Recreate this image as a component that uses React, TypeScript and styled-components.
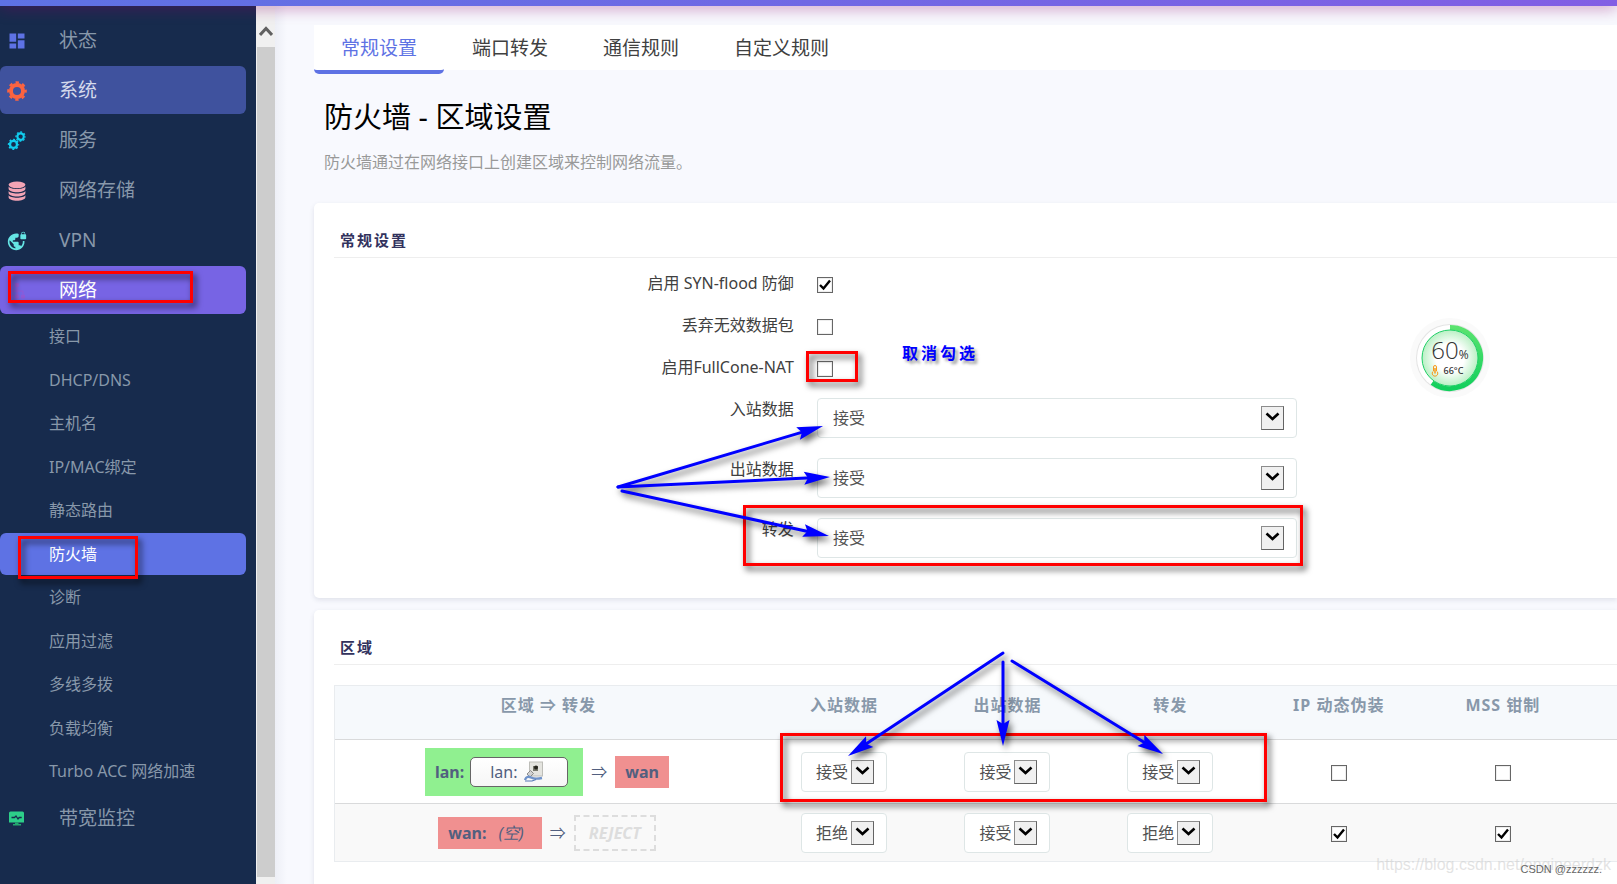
import React, { useState } from "react";
import styled, { createGlobalStyle, css } from "styled-components";
import { MdDashboard, MdVpnLock } from "react-icons/md";

const GlobalStyle = createGlobalStyle`
  *, *::before, *::after { box-sizing: border-box; }
  html, body { margin: 0; height: 100%; overflow: hidden; }
  body {
    background: #f8f9fe;
    color: #525f7f;
    font-family: "Noto Sans", "Noto Sans CJK SC", sans-serif;
    font-size: 16px;
  }
  ul { list-style: none; margin: 0; padding: 0; }
  a { color: inherit; text-decoration: none; }
`;

/* ---------- page frame ---------- */

const Page = styled.div`
  position: relative;
  display: flex;
  flex-direction: column;
  height: 100vh;
  overflow: hidden;
`;

const TopBar = styled.header`
  position: relative;
  z-index: 2;
  flex: none;
  height: 6px;
  background: linear-gradient(90deg, #5e72e4, #825ee4);
  box-shadow: 0 0 16px rgba(136, 0, 104, 0.75);
`;

const Body = styled.div`
  display: flex;
  flex: 1;
  min-height: 0;
`;

const Sidebar = styled.nav`
  flex: none;
  width: 256px;
  padding-top: 10px;
  background: #172b4d;
  overflow: hidden;
`;

const Menu = styled.ul`
  display: flex;
  flex-direction: column;
  gap: 2px;
  padding-right: 10px;
`;

const pill = css<{ $fill?: string }>`
  border-radius: 6px;
  background: ${(p) => p.$fill || "transparent"};
`;

const MenuLink = styled.a<{ $fill?: string; $color?: string }>`
  ${pill}
  display: flex;
  align-items: center;
  height: 48px;
  padding-left: 7px;
  color: ${(p) => p.$color || "#8898aa"};
  font-size: 19px;
  font-weight: 400;
  line-height: 28px;
`;

const MenuIcon = styled.span`
  display: flex;
  align-items: center;
  width: 52px;
  padding-top: 2px;
`;

const SubMenu = styled.ul`
  display: grid;
  align-content: space-between;
  height: 477px;
  margin-top: 1px;
`;

const SubLink = styled.a<{ $fill?: string; $color?: string }>`
  ${pill}
  display: flex;
  align-items: center;
  height: 42px;
  padding-left: 49px;
  color: ${(p) => p.$color || "#8898aa"};
  font-size: 16px;
  line-height: 24px;
`;

const ScrollTrack = styled.div`
  display: flex;
  flex-direction: column;
  align-items: stretch;
  flex: none;
  width: 19px;
  padding: 0 0 7px 1px;
  background: #f0f0f0;
`;

const ScrollUp = styled.div`
  display: flex;
  align-items: center;
  justify-content: center;
  height: 41px;
  padding: 9px 1px 0 0;
`;

const ScrollThumb = styled.div`
  flex: 1;
  background: #cdcdcd;
`;

const Main = styled.main`
  flex: 1;
  min-width: 0;
  padding: 19px 0 0 39px;
  background: linear-gradient(90deg, #edeff6, #f8f9fe 12px);
  overflow: hidden;
`;

/* ---------- tabs and heading ---------- */

const Tabs = styled.nav`
  display: flex;
  gap: 1px;
  height: 45px;
  background: #fff;
`;

const Tab = styled.a<{ $active?: boolean }>`
  height: 49px;
  padding: 0 27px;
  border-bottom: 4px solid ${(p) => (p.$active ? "#5e72e4" : "transparent")};
  border-radius: 0 0 5px 5px;
  color: ${(p) => (p.$active ? "#5e72e4" : "#404040")};
  font-size: 19px;
  font-weight: 400;
  line-height: 46px;
`;

const Title = styled.h1`
  margin: 27px 0 13px 10px;
  color: #000;
  font-size: 29px;
  font-weight: 400;
  line-height: 40px;
`;

const Description = styled.p`
  margin: 0 0 29px 10px;
  color: #999;
  font-size: 16px;
  font-weight: 400;
  line-height: 24px;
`;

/* ---------- cards ---------- */

const Card = styled.section`
  margin-bottom: 12px;
  padding: 0 0 20px 20px;
  border-radius: 5px 0 0 5px;
  background: #fff;
  box-shadow: 0 2px 5px rgba(50, 60, 90, 0.12);
  &:last-child { padding-bottom: 60px; }
`;

const CardTitle = styled.h2`
  margin: 0;
  padding: 26px 0 6px 6px;
  border-bottom: 1px solid #eee;
  color: #32325d;
  font-size: 15px;
  font-weight: 700;
  letter-spacing: 2px;
  line-height: 22px;
`;

const Form = styled.form`
  padding-top: 14px;
`;

const Field = styled.div<{ $tall?: boolean }>`
  display: grid;
  grid-template-columns: 36% 480px;
  column-gap: 21px;
  height: ${(p) => (p.$tall ? 60 : 42)}px;
`;

const FieldLabel = styled.label`
  padding-right: 2px;
  color: #404040;
  font-size: 16px;
  line-height: 22px;
  text-align: right;
`;

const CheckWrap = styled.span`
  position: relative;
  display: inline-block;
  width: 16px;
  height: 16px;
  vertical-align: top;
`;

const CheckSlot = styled.div`
  padding-top: 5px;
  line-height: 16px;
`;

const CheckInput = styled.input`
  appearance: none;
  display: block;
  width: 16px;
  height: 16px;
  margin: 0;
  border: 1px solid #666;
  background: #fff;
  box-shadow: inset 0 0 0 1px #eee;
  & + svg { display: none; }
  &:checked + svg { display: block; }
`;

const CheckMark = styled.svg`
  position: absolute;
  inset: 0;
  pointer-events: none;
`;

const SelectWrap = styled.span<{ $wide?: boolean }>`
  position: relative;
  display: inline-block;
  width: ${(p) => (p.$wide ? "100%" : "86px")};
  height: 40px;
  vertical-align: top;
`;

const SelectBox = styled.select<{ $wide?: boolean }>`
  appearance: none;
  display: block;
  width: 100%;
  height: 40px;
  padding: 0 0 0 ${(p) => (p.$wide ? 15 : 14)}px;
  border: 1px solid #dee6e6;
  border-radius: 4px;
  background: #fff;
  color: #525252;
  font-family: inherit;
  font-size: 16px;
  line-height: 24px;
`;

const SelectArrow = styled.span`
  position: absolute;
  top: 8px;
  right: 13px;
  display: flex;
  align-items: center;
  justify-content: center;
  width: 23px;
  height: 24px;
  padding-bottom: 2px;
  border: 1px solid;
  border-color: #8c8c8c #646464 #646464 #8c8c8c;
  background: #f0f0f0;
  pointer-events: none;
`;

/* ---------- zone table ---------- */

const ZoneTable = styled.table`
  width: 100%;
  margin-top: 20px;
  border: 1px solid #e9ecef;
  border-right: 0;
  border-collapse: separate;
  border-spacing: 0;
  table-layout: fixed;
`;

const HeadCell = styled.th`
  height: 54px;
  padding: 7px 0 0;
  border-bottom: 1px solid #d9dadb;
  background: #f6f9fc;
  color: #8898aa;
  font-size: 16px;
  font-weight: 700;
  letter-spacing: 1px;
  line-height: 24px;
  text-align: center;
  vertical-align: top;
`;

const ZoneRow = styled.tr<{ $alt?: boolean }>`
  height: ${(p) => (p.$alt ? 57 : 64)}px;
  background: ${(p) => (p.$alt ? "#f9f9f9" : "#fff")};
  & > td { border-bottom: ${(p) => (p.$alt ? "0" : "1px solid #d9dadb")}; }
`;

const Cell = styled.td`
  padding: 0;
  text-align: center;
  vertical-align: middle;
`;

const CheckCell = styled(Cell)`
  padding-top: 8px;
`;

const ZonePair = styled.div`
  display: flex;
  align-items: center;
  justify-content: center;
  gap: 8px;
  padding-right: 3px;
  line-height: 24px;
`;

const ZoneTag = styled.span<{ $tone: "lan" | "wan" }>`
  display: flex;
  align-items: center;
  gap: 6px;
  height: ${(p) => (p.$tone === "lan" ? 48 : 32)}px;
  padding: 0 ${(p) => (p.$tone === "lan" ? 15 : 10)}px 0 10px;
  background: ${(p) => (p.$tone === "lan" ? "#90f090" : "#f09090")};
  font-weight: 700;
`;

const EmptyNote = styled.em`
  padding: 0 8px 0 6px;
  font-weight: 400;
`;

const NetBadge = styled.span`
  display: flex;
  align-items: center;
  gap: 6px;
  width: 98px;
  height: 30px;
  padding-left: 19px;
  border: 1px solid #666;
  border-radius: 5px;
  background: linear-gradient(#fff, #f6f6f6);
  font-weight: 400;
`;

const Reject = styled.em`
  height: 36px;
  padding: 0 13px;
  border: 2px dashed #ddd;
  color: #ddd;
  font-weight: 700;
  line-height: 32px;
`;

/* ---------- floating layers ---------- */

const Monitor = styled.div`
  position: absolute;
  z-index: 3;
  top: 317px;
  right: 126px;
  width: 82px;
  height: 82px;
`;

const MonitorRing = styled.svg`
  position: absolute;
  inset: 0;
`;

const MonitorText = styled.div`
  position: relative;
  display: flex;
  flex-direction: column;
  align-items: center;
  padding-top: 19px;
  color: #333;
`;

const Load = styled.div`
  display: flex;
  align-items: baseline;
  height: 28px;
  font-family: "Open Sans", "Noto Sans", sans-serif;
  font-size: 24px;
  font-weight: 300;
  line-height: 28px;
`;

const Percent = styled.span`
  font-size: 12px;
  font-weight: 400;
  line-height: 12px;
`;

const Heat = styled.div`
  display: flex;
  align-items: center;
  gap: 5px;
  height: 14px;
  padding-right: 6px;
  font-size: 9px;
  font-weight: 500;
  line-height: 14px;
`;

const Mark = styled.div<{ $x: number; $y: number; $w: number; $h: number }>`
  position: absolute;
  z-index: 4;
  left: ${(p) => p.$x}px;
  top: ${(p) => p.$y}px;
  width: ${(p) => p.$w}px;
  height: ${(p) => p.$h}px;
  border: 3px solid #f00;
  filter: drop-shadow(3px 4px 3px rgba(0, 0, 0, 0.7));
  pointer-events: none;
`;

const Arrows = styled.svg`
  position: absolute;
  z-index: 4;
  top: 0;
  left: 0;
  filter: drop-shadow(3px 4px 3px rgba(0, 0, 0, 0.6));
  pointer-events: none;
`;

const MarkNote = styled.strong`
  position: absolute;
  z-index: 4;
  top: 341px;
  left: 902px;
  color: #00f;
  font-size: 16px;
  letter-spacing: 3px;
  line-height: 24px;
  text-shadow: 3px 3px 3px rgba(0, 0, 0, 0.4);
`;

const SiteMark = styled.div`
  position: absolute;
  z-index: 4;
  right: 6px;
  bottom: 9px;
  color: rgba(200, 200, 200, 0.5);
  font-family: "Liberation Sans", sans-serif;
  font-size: 16px;
  line-height: 20px;
`;

const AuthorMark = styled.div`
  position: absolute;
  z-index: 5;
  right: 15px;
  bottom: 6px;
  color: #666;
  font-family: "Liberation Sans", sans-serif;
  font-size: 11px;
  line-height: 18px;
`;

/* ---------- icons ---------- */

const Gear = ({ cx, cy, r, color }: { cx: number; cy: number; r: number; color: string }) => {
  const tooth = (2 * Math.PI * r) / 16;
  return (
    <g fill="none" stroke={color}>
      <circle cx={cx} cy={cy} r={r * 0.7} strokeWidth={r * 0.46} />
      <circle
        cx={cx}
        cy={cy}
        r={r}
        strokeWidth={r * 0.28}
        strokeDasharray={`${tooth} ${tooth}`}
        strokeDashoffset={tooth / 2}
      />
    </g>
  );
};

const SystemIcon = () => (
  <svg width="20" height="20" viewBox="0 0 20 20">
    <Gear cx={10} cy={10} r={8.6} color="#fb6340" />
  </svg>
);

const ServicesIcon = () => (
  <svg width="20" height="20" viewBox="0 0 20 20">
    <Gear cx={6.5} cy={13.4} r={5} color="#11cdef" />
    <Gear cx={13.6} cy={5.6} r={4.6} color="#11cdef" />
  </svg>
);

const StorageIcon = () => (
  <svg width="20" height="20" viewBox="0 0 20 20" fill="#f3a4b5">
    <ellipse cx="10" cy="3.8" rx="8.4" ry="3.4" />
    <path d="M1.6 5.6C3 8.9 17 8.9 18.4 5.6v2.2c0 4.6-16.8 4.6-16.8 0z" />
    <path d="M1.6 10C3 13.3 17 13.3 18.4 10v2c0 4.6-16.8 4.6-16.8 0z" />
    <path d="M1.6 14.2C3 17.5 17 17.5 18.4 14.2v2.1c0 4.6-16.8 4.6-16.8 0z" />
  </svg>
);

const NetworkIcon = () => (
  <svg width="20" height="20" viewBox="0 0 20 20" fill="#9b55cf" stroke="#9b55cf" opacity="0.7">
    <path d="M8.5 2.5h3v3h-3zM2.5 14h3v3h-3zM8.5 14h3v3h-3zM14.5 14h3v3h-3z" />
    <path d="M10 6v8M4 13v-3h12v3" fill="none" />
  </svg>
);

const BandwidthIcon = () => (
  <svg width="20" height="20" viewBox="0 0 20 20">
    <path d="M3.5 2.5h12a1.5 1.5 0 0 1 1.5 1.5v9.5h-15V4a1.5 1.5 0 0 1 1.5-1.5z" fill="#2dce89" />
    <path d="M8 13.5h3.500V15H14v1.500H6V15h2z" fill="#24a870" />
    <path d="M4.500 8.500h3l1.500-1.500 2 3 1.200-1.500h2.500" fill="none" stroke="#172b4d" strokeWidth="1.300" />
  </svg>
);

const EthernetIcon = () => (
  <svg width="19" height="21" viewBox="0 0 19 21">
    <rect x="5.500" y="1" width="13" height="14" fill="#e4e4df" stroke="#bdbdb8" />
    <path d="M9 5h5v5H9z" fill="#77786c" />
    <circle cx="12" cy="6.500" r="2" fill="#26261e" />
    <path d="M3 13l3.500-3.500 3 3L6 16z" fill="#d2d2d2" stroke="#777" strokeWidth=".8" />
    <path d="M1 19c1-4 4-3.500 6-2.500s6 1.500 11 .5" fill="none" stroke="#6f92c9" strokeWidth="2.400" />
    <path d="M1 20h7l4-1.500" fill="none" stroke="#5479b5" strokeWidth="1.200" />
  </svg>
);

/* ---------- controls ---------- */

const Check = ({ id, label, on }: { id: string; label?: string; on?: boolean }) => (
  <CheckWrap>
    <CheckInput type="checkbox" id={id} aria-label={label} defaultChecked={on} />
    <CheckMark width="16" height="16" viewBox="0 0 16 16">
      <path d="M3 8l3.500 3.500L13 3.500" fill="none" stroke="#000" strokeWidth="2.400" />
    </CheckMark>
  </CheckWrap>
);

const Policy = ({ id, label, value, wide }: { id: string; label?: string; value: string; wide?: boolean }) => (
  <SelectWrap $wide={wide}>
    <SelectBox id={id} aria-label={label} defaultValue={value} $wide={wide}>
      <option>接受</option>
      <option>拒绝</option>
      <option>丢弃</option>
    </SelectBox>
    <SelectArrow>
      <svg width="15" height="10" viewBox="0 0 15 10">
        <path d="M1.500 1.500l6 5.500 6-5.500" fill="none" stroke="#000" strokeWidth="2.600" />
      </svg>
    </SelectArrow>
  </SelectWrap>
);

/* One annotation arrow: a shaft with a swept head at (x2, y2). */
const Arrow = ({ x1, y1, x2, y2 }: { x1: number; y1: number; x2: number; y2: number }) => {
  const angle = (Math.atan2(y2 - y1, x2 - x1) * 180) / Math.PI;
  const length = Math.hypot(x2 - x1, y2 - y1);
  return (
    <g transform={`translate(${x2} ${y2}) rotate(${angle})`}>
      <path d={`M${-length} 0H-18`} stroke="#00f" strokeWidth="3" strokeLinecap="round" />
      <path d="M0 0L-26 -6.500L-22 0L-26 6.500Z" fill="#00f" />
    </g>
  );
};

const subItems = [
  "接口", "DHCP/DNS", "主机名", "IP/MAC绑定", "静态路由", "防火墙",
  "诊断", "应用过滤", "多线多拨", "负载均衡", "Turbo ACC 网络加速",
];

const menuItems: { text: string; icon: React.ReactNode; fill?: string; color?: string; open?: boolean }[] = [
  { text: "状态", icon: <MdDashboard size={20} color="#5e72e4" /> },
  { text: "系统", icon: <SystemIcon />, fill: "#3f529e", color: "#d5daec" },
  { text: "服务", icon: <ServicesIcon /> },
  { text: "网络存储", icon: <StorageIcon /> },
  { text: "VPN", icon: <MdVpnLock size={20} color="#65e5e5" /> },
  { text: "网络", icon: <NetworkIcon />, fill: "#7764e4", color: "#fff", open: true },
  { text: "带宽监控", icon: <BandwidthIcon /> },
];

const tabs = ["常规设置", "端口转发", "通信规则", "自定义规则"];

const checks = [
  { id: "syn", text: "启用 SYN-flood 防御", on: true },
  { id: "drop", text: "丢弃无效数据包" },
  { id: "cone", text: "启用FullCone-NAT" },
];

const policies = ["入站数据", "出站数据", "转发"];

const columnWidths = ["33.3%", "12.8%", "12.7%", "12.7%", "13.6%", "12%", "auto"];

export default function App() {
  const [activeTab, setActiveTab] = useState(0);

  return (
    <>
      <GlobalStyle />
      <Page>
        <TopBar />
        <Body>
          <Sidebar>
            <Menu>
              {menuItems.map((item) => (
                <li key={item.text}>
                  <MenuLink href="#" $fill={item.fill} $color={item.color}>
                    <MenuIcon>{item.icon}</MenuIcon>
                    {item.text}
                  </MenuLink>
                  {item.open && (
                    <SubMenu>
                      {subItems.map((name) => (
                        <li key={name}>
                          <SubLink
                            href="#"
                            $fill={name === "防火墙" ? "#5e72e4" : undefined}
                            $color={name === "防火墙" ? "#fff" : undefined}
                          >
                            {name}
                          </SubLink>
                        </li>
                      ))}
                    </SubMenu>
                  )}
                </li>
              ))}
            </Menu>
          </Sidebar>
          <ScrollTrack>
            <ScrollUp>
              <svg width="14" height="12" viewBox="0 0 14 12">
                <path d="M1 10l6-6.500 6 6.500" fill="none" stroke="#606060" strokeWidth="3" />
              </svg>
            </ScrollUp>
            <ScrollThumb />
          </ScrollTrack>

          <Main>
            <Tabs>
              {tabs.map((name, i) => (
                <Tab key={name} href="#" $active={i === activeTab} onClick={() => setActiveTab(i)}>
                  {name}
                </Tab>
              ))}
            </Tabs>
            <Title>防火墙 - 区域设置</Title>
            <Description>防火墙通过在网络接口上创建区域来控制网络流量。</Description>

            <Card>
              <CardTitle>常规设置</CardTitle>
              <Form>
                {checks.map((c) => (
                  <Field key={c.id}>
                    <FieldLabel htmlFor={c.id}>{c.text}</FieldLabel>
                    <CheckSlot>
                      <Check id={c.id} on={c.on} />
                    </CheckSlot>
                  </Field>
                ))}
                {policies.map((text, i) => (
                  <Field key={text} $tall>
                    <FieldLabel htmlFor={`policy-${i}`}>{text}</FieldLabel>
                    <Policy id={`policy-${i}`} value="接受" wide />
                  </Field>
                ))}
              </Form>
            </Card>

            <Card>
              <CardTitle>区域</CardTitle>
              <ZoneTable>
                <colgroup>
                  {columnWidths.map((width, i) => (
                    <col key={i} style={{ width }} />
                  ))}
                </colgroup>
                <thead>
                  <tr>
                    <HeadCell>区域 ⇒ 转发</HeadCell>
                    <HeadCell>入站数据</HeadCell>
                    <HeadCell>出站数据</HeadCell>
                    <HeadCell>转发</HeadCell>
                    <HeadCell>IP 动态伪装</HeadCell>
                    <HeadCell>MSS 钳制</HeadCell>
                    <HeadCell as="td" />
                  </tr>
                </thead>
                <tbody>
                  <ZoneRow>
                    <Cell>
                      <ZonePair>
                        <ZoneTag $tone="lan">
                          lan:
                          <NetBadge>
                            lan: <EthernetIcon />
                          </NetBadge>
                        </ZoneTag>
                        ⇒
                        <ZoneTag $tone="wan">wan</ZoneTag>
                      </ZonePair>
                    </Cell>
                    {["接受", "接受", "接受"].map((value, i) => (
                      <Cell key={i}>
                        <Policy id={`lan-${i}`} label={`lan ${policies[i]}`} value={value} />
                      </Cell>
                    ))}
                    <CheckCell><Check id="lan-masq" label="lan IP 动态伪装" /></CheckCell>
                    <CheckCell><Check id="lan-mss" label="lan MSS 钳制" /></CheckCell>
                    <Cell />
                  </ZoneRow>
                  <ZoneRow $alt>
                    <Cell>
                      <ZonePair>
                        <ZoneTag $tone="wan">
                          wan: <EmptyNote>(空)</EmptyNote>
                        </ZoneTag>
                        ⇒
                        <Reject>REJECT</Reject>
                      </ZonePair>
                    </Cell>
                    {["拒绝", "接受", "拒绝"].map((value, i) => (
                      <Cell key={i}>
                        <Policy id={`wan-${i}`} label={`wan ${policies[i]}`} value={value} />
                      </Cell>
                    ))}
                    <CheckCell><Check id="wan-masq" label="wan IP 动态伪装" on /></CheckCell>
                    <CheckCell><Check id="wan-mss" label="wan MSS 钳制" on /></CheckCell>
                    <Cell />
                  </ZoneRow>
                </tbody>
              </ZoneTable>
            </Card>
          </Main>
        </Body>

        <Monitor>
          <MonitorRing width="82" height="82" viewBox="0 0 82 82">
            <defs>
              <radialGradient id="load-fill">
                <stop offset="0.5" stopColor="#fff" />
                <stop offset="1" stopColor="#b9f0c4" />
              </radialGradient>
              <linearGradient id="load-ring" x1="0" y1="0" x2="0" y2="1">
                <stop offset="0" stopColor="#5ae36f" />
                <stop offset="1" stopColor="#12cf5c" />
              </linearGradient>
            </defs>
            <circle cx="41" cy="41" r="40" fill="#fafafa" />
            <circle cx="41" cy="41" r="34" fill="#e4e4e4" />
            <circle cx="41" cy="41" r="33" fill="#fff" />
            <path d="M41 10.500a30.500 30.500 0 1 1-17.900 55.200" fill="none" stroke="url(#load-ring)" strokeWidth="5" />
            <circle cx="41" cy="41" r="28" fill="url(#load-fill)" stroke="#1fcf66" />
          </MonitorRing>
          <MonitorText>
            <Load>
              60<Percent>%</Percent>
            </Load>
            <Heat>
              <svg width="8" height="12" viewBox="0 0 8 12" fill="none" stroke="#f79a1e">
                <path d="M2.500 6V2a1.500 1.500 0 0 1 3 0v4a2.800 2.800 0 1 1-3 0z" />
                <path d="M4 3v5.500" strokeWidth="1.500" />
              </svg>
              66°C
            </Heat>
          </MonitorText>
        </Monitor>

        <Mark $x={8} $y={271} $w={185} $h={32} />
        <Mark $x={18} $y={536} $w={120} $h={43} />
        <Mark $x={806} $y={351} $w={52} $h={31} />
        <Mark $x={743} $y={505} $w={560} $h={61} />
        <Mark $x={780} $y={733} $w={487} $h={69} />
        <Arrows width="1300" height="800" viewBox="0 0 1300 800">
          <Arrow x1={618} y1={487} x2={823} y2={426} />
          <Arrow x1={618} y1={487} x2={830} y2={477} />
          <Arrow x1={622} y1={491} x2={829} y2={536} />
          <Arrow x1={1003} y1={653} x2={848} y2={756} />
          <Arrow x1={1003} y1={662} x2={1003} y2={746} />
          <Arrow x1={1012} y1={661} x2={1163} y2={754} />
        </Arrows>
        <MarkNote>取消勾选</MarkNote>
        <SiteMark>https://blog.csdn.net/engineerdzk</SiteMark>
        <AuthorMark>CSDN @zzzzzz.</AuthorMark>
      </Page>
    </>
  );
}
